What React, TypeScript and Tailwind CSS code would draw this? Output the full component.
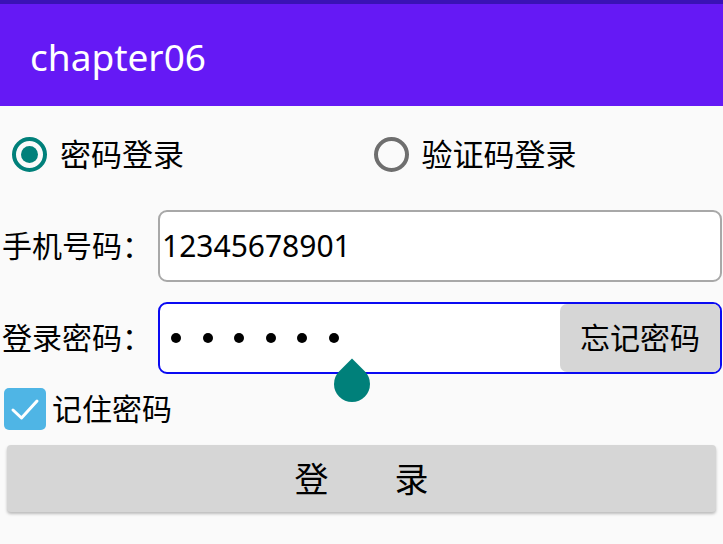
import { useState } from "react";

const font = "font-['Noto_Sans','Noto_Sans_CJK_SC',sans-serif]";

function Radio({ checked, label }: { checked: boolean; label: string }) {
  return (
    <div className="flex items-center pl-[12px] gap-[13px]">
      {checked ? (
        <div className="w-[35px] h-[35px] rounded-full border-[4px] border-[#00807a] flex items-center justify-center">
          <div className="w-[17px] h-[17px] rounded-full bg-[#00807a]" />
        </div>
      ) : (
        <div className="w-[35px] h-[35px] rounded-full border-[4px] border-[#6e6e6e]" />
      )}
      <span className="text-[31px] leading-none text-black">{label}</span>
    </div>
  );
}

export default function App() {
  const [remember] = useState(true);

  return (
    <div className={`relative w-[723px] h-[544px] bg-[#fafafa] overflow-hidden ${font}`}>
      <div className="h-[4px] bg-[#3a12b6]" />
      <div className="h-[102px] bg-[#6519f5] flex items-center pl-[30px]">
        <span className="text-[37px] text-white leading-none pt-[2px]">chapter06</span>
      </div>

      <div className="h-[96px] grid grid-cols-2 items-center">
        <Radio checked label="密码登录" />
        <Radio checked={false} label="验证码登录" />
      </div>

      <div className="pt-[8px]">
        <div className="flex items-center h-[72px]">
          <span className="w-[158px] pl-[2px] text-[30px] text-black leading-none">手机号码：</span>
          <div className="w-[564px] h-[72px] border-2 border-[#a8a8a8] rounded-[9px] bg-white flex items-center pl-[2px]">
            <span className="text-[30px] text-black leading-none">12345678901</span>
          </div>
        </div>

        <div className="flex items-center h-[72px] mt-[20px]">
          <span className="w-[158px] pl-[2px] text-[30px] text-black leading-none">登录密码：</span>
          <div className="w-[564px] h-[72px] border-2 border-[#0a0af2] rounded-[9px] bg-white flex items-center">
            <div className="flex-1 flex items-center gap-[21.6px] pl-[11px]">
              {[0, 1, 2, 3, 4, 5].map((i) => (
                <span key={i} className="w-[10px] h-[10px] rounded-full bg-black" />
              ))}
            </div>
            <div className="w-[160px] h-[68px] bg-[#d6d6d6] rounded-[7px] flex items-center justify-center">
              <span className="text-[30px] text-black leading-none">忘记密码</span>
            </div>
          </div>
        </div>

        <div className="flex items-center h-[42px] mt-[14px] pl-[4px] gap-[6px]">
          <div className="w-[42px] h-[42px] rounded-[5px] bg-[#4fb5e5] flex items-center justify-center">
            {remember && (
              <svg width="32" height="32" viewBox="0 0 32 32" fill="none">
                <path d="M4 17 L12.5 25 L28 8" stroke="white" strokeWidth="3" strokeLinecap="round" strokeLinejoin="round" />
              </svg>
            )}
          </div>
          <span className="text-[30px] text-black leading-none">记住密码</span>
        </div>

        <div className="mt-[15px] mx-[7px] h-[67px] bg-[#d6d6d6] rounded-[4px] shadow-[0_2px_3px_rgba(0,0,0,0.25)] flex items-center justify-center gap-[66px]">
          <span className="text-[34px] text-black leading-none">登</span>
          <span className="text-[34px] text-black leading-none">录</span>
        </div>
      </div>

      {/* text cursor handle */}
      <div className="absolute left-[334px] top-[366px] w-[36px] h-[36px] bg-[#00807a] rounded-full rounded-tl-none rotate-45" />
    </div>
  );
}
